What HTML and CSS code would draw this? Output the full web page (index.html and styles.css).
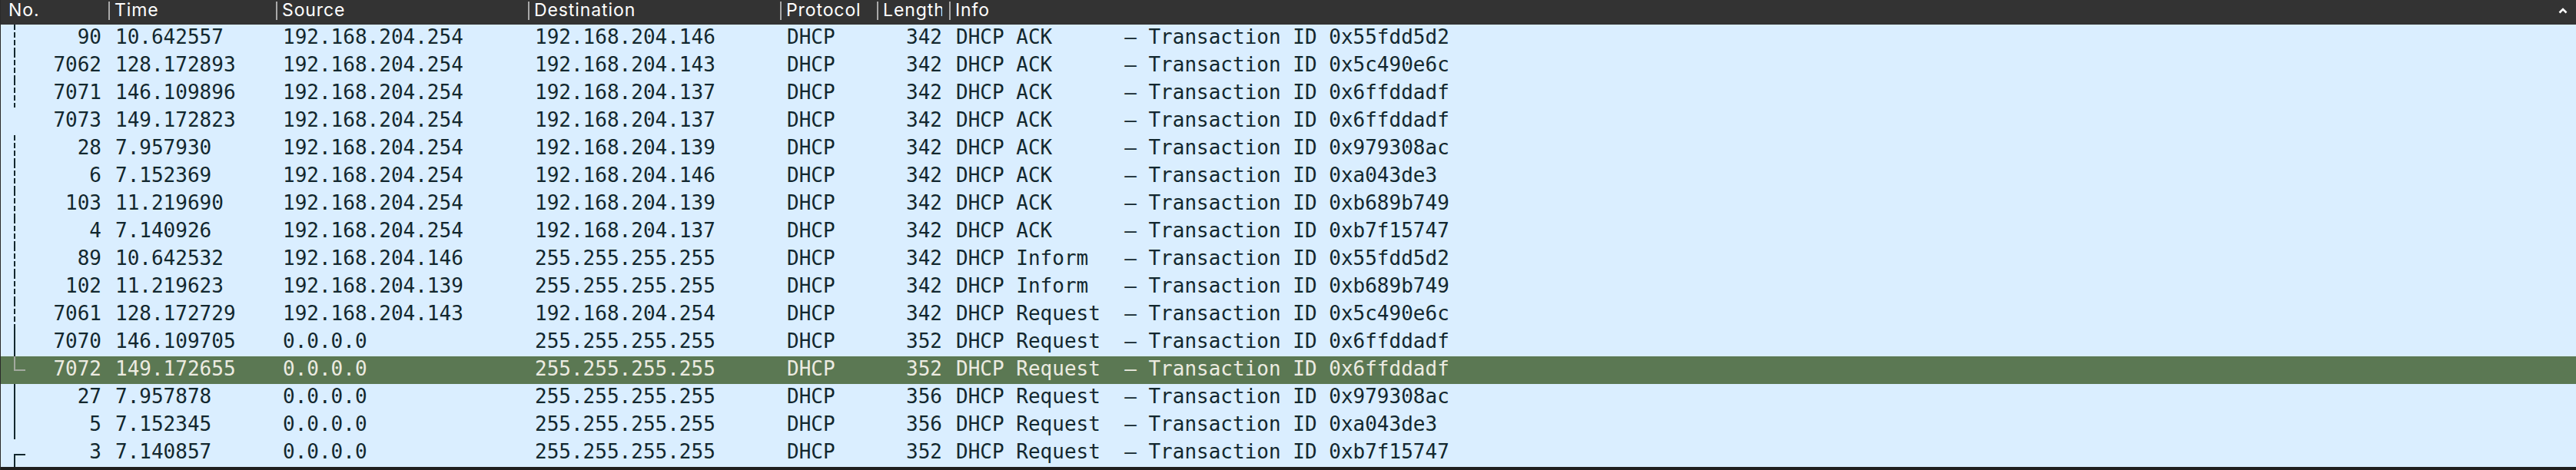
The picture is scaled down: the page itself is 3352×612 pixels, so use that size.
FILE: index.html
```html
<!DOCTYPE html>
<html>
<head>
<meta charset="utf-8">
<link rel="stylesheet" href="styles.css">
</head>
<body>
<div class="list">
  <div class="grid header">
    <div class="hcell first"><span class="hlabel">No.</span></div>
    <div class="hcell"><span class="sep"></span><span class="hlabel">Time</span></div>
    <div class="hcell"><span class="sep"></span><span class="hlabel">Source</span></div>
    <div class="hcell"><span class="sep"></span><span class="hlabel">Destination</span></div>
    <div class="hcell"><span class="sep"></span><span class="hlabel">Protocol</span></div>
    <div class="hcell tight"><span class="sep"></span><span class="hlabel clip">Length</span></div>
    <div class="hcell info"><span class="sep"></span><span class="hlabel">Info</span><span class="grow"></span><svg class="sort" width="12" height="8" viewBox="0 0 12 8"><polyline points="1.5,6.5 6,2 10.5,6.5" fill="none" stroke="#ffffff" stroke-width="2.6" stroke-linejoin="miter"/></svg></div>
  </div>

  <div class="grid row"><div class="cell no"><span class="tree t-dash"></span><span class="num">90</span></div><div class="cell">10.642557</div><div class="cell">192.168.204.254</div><div class="cell">192.168.204.146</div><div class="cell">DHCP</div><div class="cell r">342</div><div class="cell">DHCP ACK      – Transaction ID 0x55fdd5d2</div></div>
  <div class="grid row"><div class="cell no"><span class="tree t-dash"></span><span class="num">7062</span></div><div class="cell">128.172893</div><div class="cell">192.168.204.254</div><div class="cell">192.168.204.143</div><div class="cell">DHCP</div><div class="cell r">342</div><div class="cell">DHCP ACK      – Transaction ID 0x5c490e6c</div></div>
  <div class="grid row"><div class="cell no"><span class="tree t-dash"></span><span class="num">7071</span></div><div class="cell">146.109896</div><div class="cell">192.168.204.254</div><div class="cell">192.168.204.137</div><div class="cell">DHCP</div><div class="cell r">342</div><div class="cell">DHCP ACK      – Transaction ID 0x6ffddadf</div></div>
  <div class="grid row"><div class="cell no"><span class="tree"></span><span class="num">7073</span></div><div class="cell">149.172823</div><div class="cell">192.168.204.254</div><div class="cell">192.168.204.137</div><div class="cell">DHCP</div><div class="cell r">342</div><div class="cell">DHCP ACK      – Transaction ID 0x6ffddadf</div></div>
  <div class="grid row"><div class="cell no"><span class="tree t-dash"></span><span class="num">28</span></div><div class="cell">7.957930</div><div class="cell">192.168.204.254</div><div class="cell">192.168.204.139</div><div class="cell">DHCP</div><div class="cell r">342</div><div class="cell">DHCP ACK      – Transaction ID 0x979308ac</div></div>
  <div class="grid row"><div class="cell no"><span class="tree t-dash"></span><span class="num">6</span></div><div class="cell">7.152369</div><div class="cell">192.168.204.254</div><div class="cell">192.168.204.146</div><div class="cell">DHCP</div><div class="cell r">342</div><div class="cell">DHCP ACK      – Transaction ID 0xa043de3</div></div>
  <div class="grid row"><div class="cell no"><span class="tree t-dash"></span><span class="num">103</span></div><div class="cell">11.219690</div><div class="cell">192.168.204.254</div><div class="cell">192.168.204.139</div><div class="cell">DHCP</div><div class="cell r">342</div><div class="cell">DHCP ACK      – Transaction ID 0xb689b749</div></div>
  <div class="grid row"><div class="cell no"><span class="tree t-dash"></span><span class="num">4</span></div><div class="cell">7.140926</div><div class="cell">192.168.204.254</div><div class="cell">192.168.204.137</div><div class="cell">DHCP</div><div class="cell r">342</div><div class="cell">DHCP ACK      – Transaction ID 0xb7f15747</div></div>
  <div class="grid row"><div class="cell no"><span class="tree t-dash"></span><span class="num">89</span></div><div class="cell">10.642532</div><div class="cell">192.168.204.146</div><div class="cell">255.255.255.255</div><div class="cell">DHCP</div><div class="cell r">342</div><div class="cell">DHCP Inform   – Transaction ID 0x55fdd5d2</div></div>
  <div class="grid row"><div class="cell no"><span class="tree t-dash"></span><span class="num">102</span></div><div class="cell">11.219623</div><div class="cell">192.168.204.139</div><div class="cell">255.255.255.255</div><div class="cell">DHCP</div><div class="cell r">342</div><div class="cell">DHCP Inform   – Transaction ID 0xb689b749</div></div>
  <div class="grid row"><div class="cell no"><span class="tree t-dash"></span><span class="num">7061</span></div><div class="cell">128.172729</div><div class="cell">192.168.204.143</div><div class="cell">192.168.204.254</div><div class="cell">DHCP</div><div class="cell r">342</div><div class="cell">DHCP Request  – Transaction ID 0x5c490e6c</div></div>
  <div class="grid row"><div class="cell no"><span class="tree t-solid"></span><span class="num">7070</span></div><div class="cell">146.109705</div><div class="cell">0.0.0.0</div><div class="cell">255.255.255.255</div><div class="cell">DHCP</div><div class="cell r">352</div><div class="cell">DHCP Request  – Transaction ID 0x6ffddadf</div></div>
  <div class="grid row selected"><div class="cell no"><span class="tree"><span class="t-end"></span></span><span class="num">7072</span></div><div class="cell">149.172655</div><div class="cell">0.0.0.0</div><div class="cell">255.255.255.255</div><div class="cell">DHCP</div><div class="cell r">352</div><div class="cell">DHCP Request  – Transaction ID 0x6ffddadf</div></div>
  <div class="grid row"><div class="cell no"><span class="tree t-solid"></span><span class="num">27</span></div><div class="cell">7.957878</div><div class="cell">0.0.0.0</div><div class="cell">255.255.255.255</div><div class="cell">DHCP</div><div class="cell r">356</div><div class="cell">DHCP Request  – Transaction ID 0x979308ac</div></div>
  <div class="grid row"><div class="cell no"><span class="tree t-solid"></span><span class="num">5</span></div><div class="cell">7.152345</div><div class="cell">0.0.0.0</div><div class="cell">255.255.255.255</div><div class="cell">DHCP</div><div class="cell r">356</div><div class="cell">DHCP Request  – Transaction ID 0xa043de3</div></div>
  <div class="grid row"><div class="cell no"><span class="tree"><span class="t-start"></span></span><span class="num">3</span></div><div class="cell">7.140857</div><div class="cell">0.0.0.0</div><div class="cell">255.255.255.255</div><div class="cell">DHCP</div><div class="cell r">352</div><div class="cell">DHCP Request  – Transaction ID 0xb7f15747</div></div>

  <div class="footer"></div>
</div>
</body>
</html>
```

FILE: styles.css
```css
* { box-sizing: border-box; }
html, body { margin: 0; padding: 0; background: #1e1e1e; }
body { width: 3352px; height: 612px; overflow: hidden; }

.list {
  width: 3352px;
  border-left: 1px solid #2a2a2a;
  display: flex;
  flex-direction: column;
}

.grid {
  display: grid;
  grid-template-columns: 140px 218px 328px 328px 126px 94px 1fr;
}

.header {
  height: 32px;
  background: #333333;
  color: #ffffff;
  font-family: Inter, "Liberation Sans", sans-serif;
  font-size: 23px;
  letter-spacing: 0.9px;
}

.hcell {
  display: flex;
  align-items: flex-start;
  overflow: hidden;
  min-width: 0;
  padding-right: 6px;
}
.hcell.first { padding-left: 10px; }
.hcell.tight { padding-right: 9px; }
.hcell.info { padding-right: 11px; }

.sep {
  flex: none;
  width: 2px;
  height: 24px;
  margin-top: 2px;
  background: #a9a9a9;
}

.hlabel {
  line-height: 26px;
  padding-left: 6px;
  white-space: nowrap;
  overflow: hidden;
  min-width: 0;
}
.hcell.first .hlabel { padding-left: 0; }
.hlabel.clip { flex: 1; }

.grow { flex: 1; }
.sort { flex: none; margin-top: 10px; }

.row {
  height: 36px;
  background: #daeeff;
  color: #12272e;
  font-family: "DejaVu Sans Mono", "Liberation Mono", monospace;
  font-size: 26px;
}
.row.selected {
  background: #5b7853;
  color: #ecebe1;
}

.cell {
  line-height: 32px;
  padding: 0 9px;
  white-space: pre;
  overflow: hidden;
  min-width: 0;
}
.cell.r { text-align: right; }

.cell.no {
  display: flex;
  padding-left: 17px;
  padding-right: 9px;
}
.num {
  flex: 1;
  text-align: right;
}

.tree {
  flex: none;
  width: 16px;
  height: 36px;
  display: flex;
  flex-direction: column;
}
.t-solid { border-left: 2px solid #12272e; }
.t-dash {
  background-image: linear-gradient(#12272e 70%, transparent 70%);
  background-size: 2px 10px;
  background-repeat: repeat-y;
}
.t-end {
  width: 15px;
  height: 19px;
  border-left: 2px solid #a3a99f;
  border-bottom: 2px solid #a3a99f;
}
.t-start {
  width: 15px;
  margin-top: 19px;
  flex: 1;
  border-left: 2px solid #12272e;
  border-top: 2px solid #12272e;
}

.footer {
  height: 4px;
  background: #1e1e1e;
}
```
